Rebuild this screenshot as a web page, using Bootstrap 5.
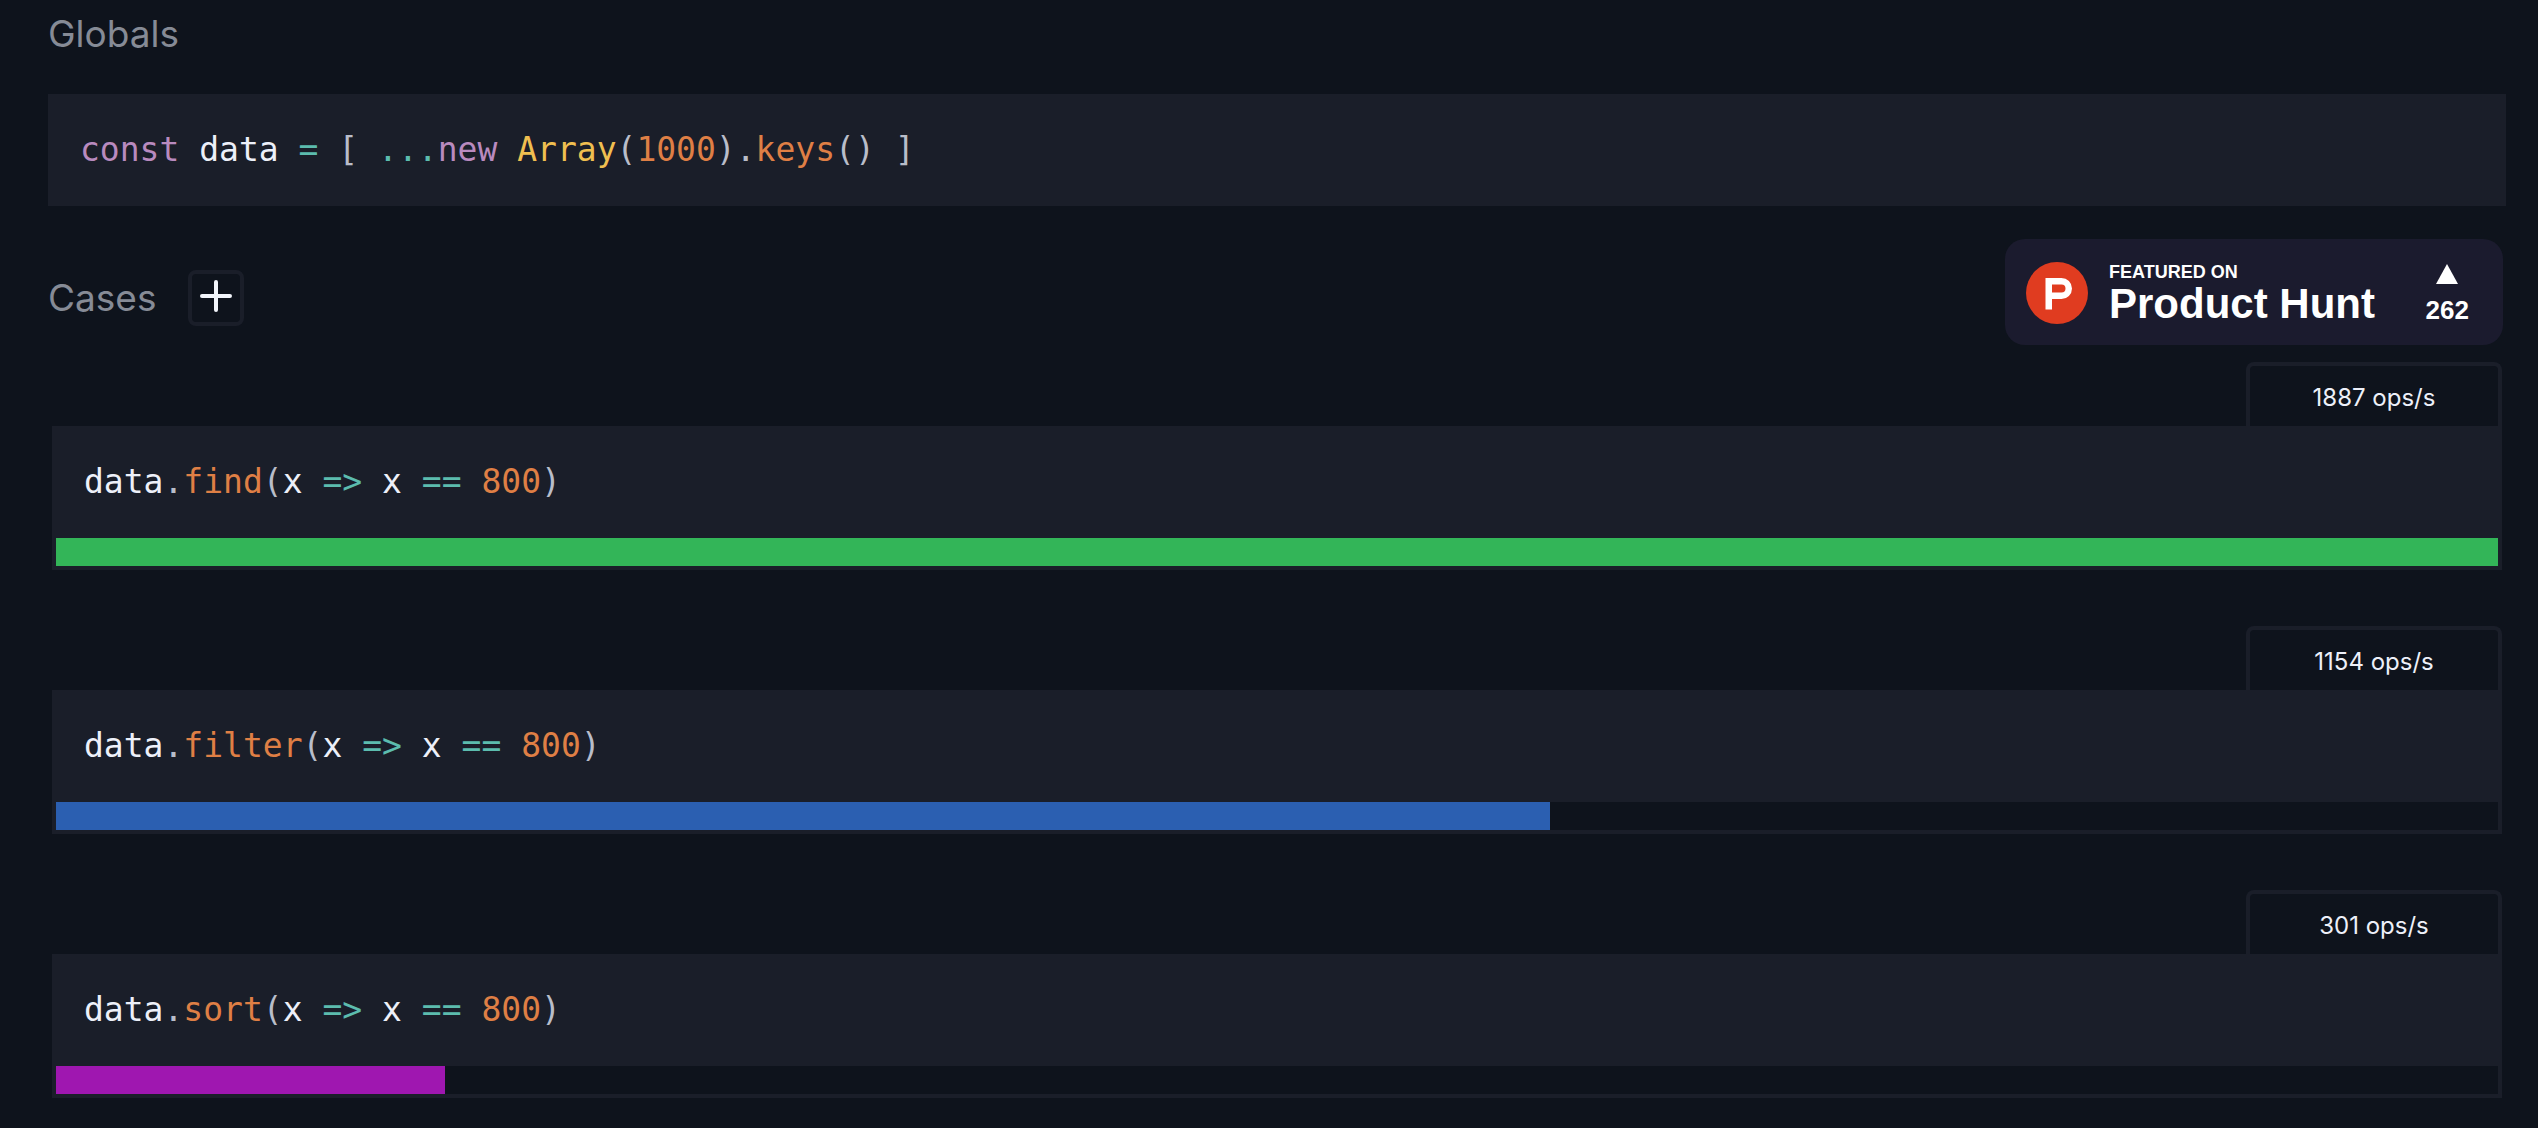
<!DOCTYPE html>
<html lang="en">
<head>
<meta charset="utf-8">
<meta name="viewport" content="width=device-width, initial-scale=1">
<title>Benchmark</title>
<link href="https://cdn.jsdelivr.net/npm/bootstrap@5.3.0/dist/css/bootstrap.min.css" rel="stylesheet">
<style>
  :root { --page: #0e131c; --panel: #1a1e29; }
  body { background: var(--page); color: #edf0f9; font-family: Inter, "Liberation Sans", sans-serif; }
  .page { padding: 10px 32px 30px 48px; }
  .title { font-size: 37px; line-height: 48px; font-weight: 400; color: #868b96; margin: 0; }
  .editor { background: var(--panel); color: #edf0f9; font-family: "DejaVu Sans Mono", monospace; font-size: 33px; line-height: 48px; padding: 32px; margin: 0; }
  .editor code { font: inherit; color: inherit; }
  .tk-key { color: #b98abf; }
  .tk-op { color: #5cbcae; }
  .tk-pun { color: #b9bdc9; }
  .tk-cls { color: #f0bf50; }
  .tk-fn { color: #df7f45; }
  .globals { margin-top: 36px; }
  .toolbar { margin-top: 32px; }
  .toolbar-start { gap: 32px; margin-bottom: 20px; }
  .add-case { width: 56px; height: 56px; border: 4px solid var(--panel); border-radius: 8px; padding: 0 0 4px; color: #f2f5fb; background: transparent; }
  .ph-badge { height: 106px; width: 498px; border-radius: 20px; background: #1b1b2e; color: #fff; font-family: "Liberation Sans", sans-serif; font-weight: 700; margin: 1px 3px; padding: 2px 34px 0 21px; }
  .ph-name { margin-left: 21px; padding-top: 2px; }
  .ph-over { font-size: 18px; line-height: 20px; }
  .ph-title { font-size: 42px; line-height: 44px; }
  .ph-votes { font-size: 26px; line-height: 32px; gap: 10px; padding-top: 4px; }
  .cases { margin-top: 16px; padding: 0 4px; gap: 56px; }
  .ops { width: 256px; height: 64px; border: 4px solid var(--panel); border-bottom: 0; border-radius: 8px 8px 0 0; font-size: 24px; padding-top: 4px; }
  .meter { height: 32px; border: solid var(--panel); border-width: 0 4px 4px; border-radius: 0; background: var(--page); }
  .bar-green { background: #33b558; }
  .bar-blue { background: #2b5fb1; }
  .bar-purple { background: #9f17b0; }
</style>
</head>
<body>
<main class="page">
  <h2 class="title">Globals</h2>
  <pre class="editor globals"><code><span class="tk-key">const</span> data <span class="tk-op">=</span> <span class="tk-pun">[</span> <span class="tk-op">...</span><span class="tk-key">new</span> <span class="tk-cls">Array</span><span class="tk-pun">(</span><span class="tk-fn">1000</span><span class="tk-pun">).</span><span class="tk-fn">keys</span><span class="tk-pun">() ]</span></code></pre>

  <div class="toolbar d-flex justify-content-between align-items-end">
    <div class="toolbar-start d-flex align-items-center">
      <h2 class="title">Cases</h2>
      <button type="button" class="add-case btn d-flex align-items-center justify-content-center" aria-label="Add case">
        <svg width="32" height="32" viewBox="0 0 32 32" fill="none" stroke="currentColor" stroke-width="4" stroke-linecap="round" aria-hidden="true"><path d="M16 2v28M2 16h28"/></svg>
      </button>
    </div>
    <a href="#" class="ph-badge d-flex align-items-center text-decoration-none">
      <svg width="62" height="62" viewBox="0 0 62 62" aria-hidden="true"><circle cx="31" cy="31" r="31" fill="#e03c20"/><path fill="#fff" fill-rule="evenodd" d="M19.500 16H35.500a10.500 10.500 0 0 1 0 21H26V47.500H19.500ZM26 22.500V30.500H35.500a4 4 0 0 0 0-8Z"/></svg>
      <span class="ph-name d-flex flex-column">
        <span class="ph-over">FEATURED ON</span>
        <span class="ph-title text-nowrap">Product Hunt</span>
      </span>
      <span class="ph-votes d-flex flex-column align-items-center ms-auto">
        <svg width="22" height="20" viewBox="0 0 22 20" aria-hidden="true"><path d="M11 0l11 20H0z" fill="#fff"/></svg>
        <span>262</span>
      </span>
    </a>
  </div>

  <section class="cases d-flex flex-column">
    <article class="d-flex flex-column">
      <div class="ops align-self-end d-flex align-items-center justify-content-center">1887 ops/s</div>
      <pre class="editor"><code>data<span class="tk-pun">.</span><span class="tk-fn">find</span><span class="tk-pun">(</span>x <span class="tk-op">=&gt;</span> x <span class="tk-op">==</span> <span class="tk-fn">800</span><span class="tk-pun">)</span></code></pre>
      <div class="progress meter"><div class="progress-bar bar-green" style="width:100%"></div></div>
    </article>
    <article class="d-flex flex-column">
      <div class="ops align-self-end d-flex align-items-center justify-content-center">1154 ops/s</div>
      <pre class="editor"><code>data<span class="tk-pun">.</span><span class="tk-fn">filter</span><span class="tk-pun">(</span>x <span class="tk-op">=&gt;</span> x <span class="tk-op">==</span> <span class="tk-fn">800</span><span class="tk-pun">)</span></code></pre>
      <div class="progress meter"><div class="progress-bar bar-blue" style="width:61.16%"></div></div>
    </article>
    <article class="d-flex flex-column">
      <div class="ops align-self-end d-flex align-items-center justify-content-center">301 ops/s</div>
      <pre class="editor"><code>data<span class="tk-pun">.</span><span class="tk-fn">sort</span><span class="tk-pun">(</span>x <span class="tk-op">=&gt;</span> x <span class="tk-op">==</span> <span class="tk-fn">800</span><span class="tk-pun">)</span></code></pre>
      <div class="progress meter"><div class="progress-bar bar-purple" style="width:15.95%"></div></div>
    </article>
  </section>
</main>
<script src="https://cdn.jsdelivr.net/npm/bootstrap@5.3.0/dist/js/bootstrap.bundle.min.js"></script>
</body>
</html>
